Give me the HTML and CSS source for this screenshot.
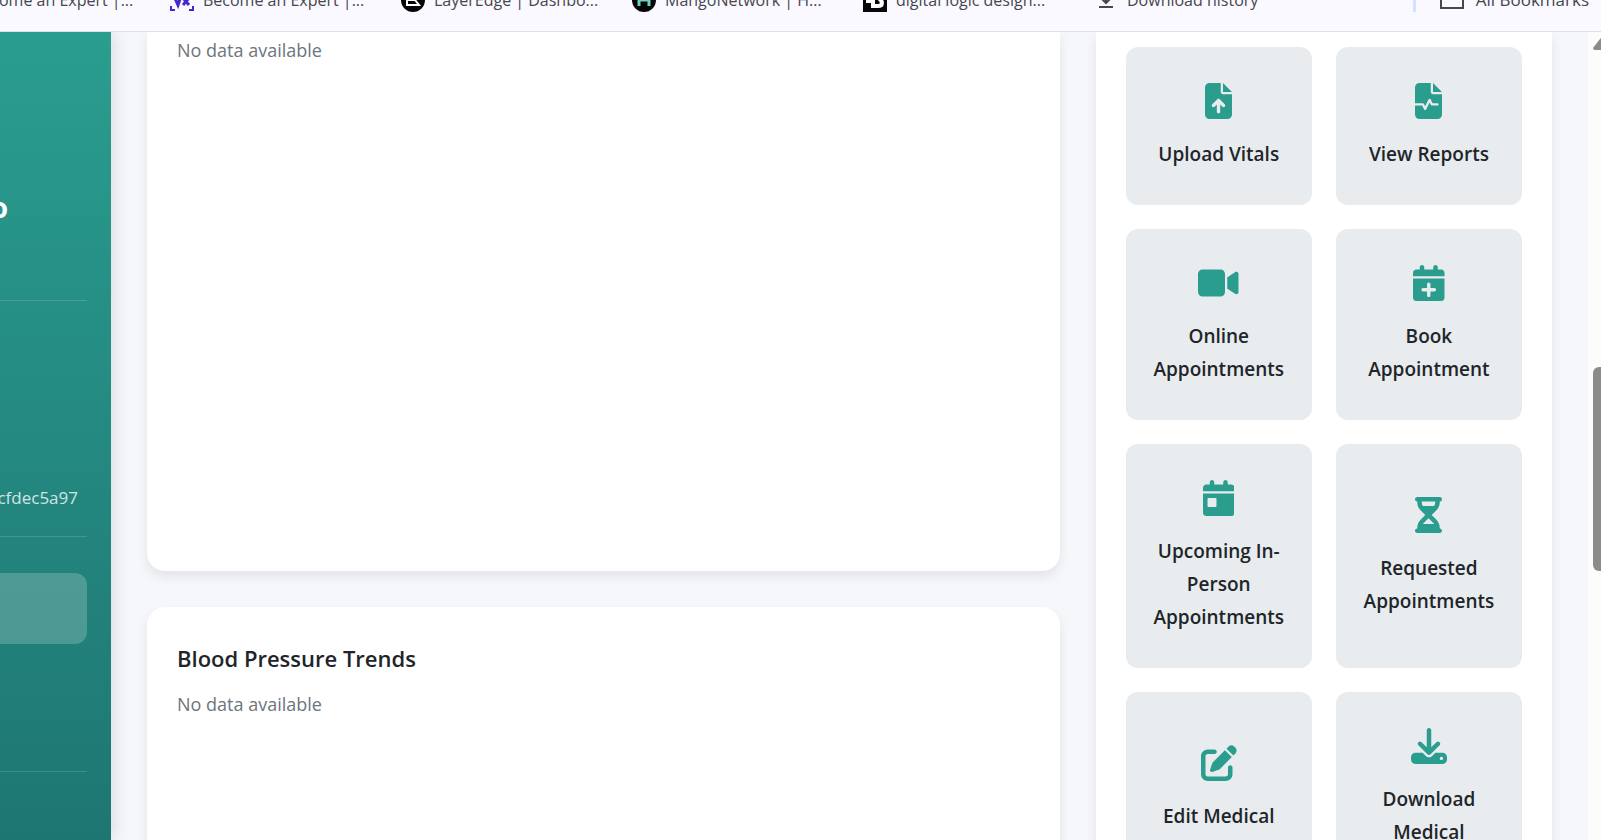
FILE: index.html
```html
<!DOCTYPE html>
<html lang="en">
<head>
<meta charset="utf-8">
<meta name="viewport" content="width=device-width, initial-scale=1">
<title>Patient Dashboard</title>
<link rel="stylesheet" href="styles.css">
</head>
<body>
<nav class="bookmarks" aria-label="Bookmarks">
  <a class="bookmark bookmark--first" href="#"><span class="favicon"></span><span class="bookmark-label">Become an Expert |...</span></a>
  <a class="bookmark" href="#">
    <svg class="favicon" viewBox="0 0 24 24" fill="none" stroke="#4527cf"><path stroke-width="2" d="M1 18v4h4M23 18v4h-4"/><path stroke-width="3" d="M4 8l4 9 3-9M13 10l6 7M19 10l-6 7"/></svg>
    <span class="bookmark-label">Become an Expert |...</span></a>
  <a class="bookmark" href="#">
    <svg class="favicon" viewBox="0 0 24 24"><circle cx="12" cy="12" r="12" fill="#050505"/><path d="M6 6h9M6 12h8l4 5H6z" fill="none" stroke="#fff" stroke-width="2"/></svg>
    <span class="bookmark-label">LayerEdge | Dashbo...</span></a>
  <a class="bookmark" href="#">
    <svg class="favicon" viewBox="0 0 24 24"><circle cx="12" cy="12" r="12" fill="#050505"/><path d="M7 5v13M17 5v13M7 12h10" fill="none" stroke="#6fcfc4" stroke-width="3"/></svg>
    <span class="bookmark-label">MangoNetwork | H...</span></a>
  <a class="bookmark" href="#">
    <svg class="favicon" viewBox="0 0 24 24"><path d="M0 0h24v24H0z" fill="#080808"/><path d="M3 13h7v5h5c5 0 5-5 1-7" fill="none" stroke="#fff" stroke-width="4"/></svg>
    <span class="bookmark-label">digital logic design...</span></a>
  <a class="bookmark" href="#">
    <svg class="favicon" viewBox="0 0 24 24" fill="none" stroke="#47464d" stroke-width="2"><path d="M12 2v12M6 9l6 6 6-6M5 19h14"/></svg>
    <span class="bookmark-label">Download history</span></a>
  <a class="all-bookmarks" href="#">
    <svg class="favicon" viewBox="0 0 24 24" fill="none" stroke="#47464d" stroke-width="2"><path d="M1 3h9l2 3h11v14H1z"/></svg>
    All Bookmarks</a>
</nav>
<div class="page">
  <aside class="sidebar">
    <div class="profile-name">o</div>
    <div class="profile-id">cfdec5a97</div>
    <a class="nav-active" href="#" aria-label="Dashboard"></a>
  </aside>
  <main class="content">
    <div class="trends">
      <section class="card card--scrolled"><p class="empty">No data available</p></section>
      <section class="card"><h2 class="card-title">Blood Pressure Trends</h2><p class="empty">No data available</p></section>
    </div>
    <section class="actions" aria-label="Quick actions">
      <a class="tile" href="#"><svg class="icon" viewBox="0 0 384 512"><path d="M64 0C28.7 0 0 28.7 0 64V448c0 35.3 28.7 64 64 64H320c35.3 0 64-28.7 64-64V160H256c-17.7 0-32-14.3-32-32V0H64zM256 0V128H384L256 0zM216 408c0 13.3-10.7 24-24 24s-24-10.7-24-24V305.9l-31 31c-9.4 9.4-24.6 9.4-33.9 0s-9.4-24.6 0-33.9l72-72c9.4-9.4 24.6-9.4 33.9 0l72 72c9.4 9.4 9.4 24.6 0 33.9s-24.6 9.4-33.9 0l-31-31V408z"/></svg>Upload Vitals</a>
      <a class="tile" href="#"><svg class="icon" viewBox="32 0 384 512"><path d="M96 0C60.7 0 32 28.7 32 64V288H144c6.1 0 11.6 3.4 14.3 8.8L176 332.2l49.7-99.4c2.7-5.4 8.3-8.8 14.3-8.8s11.6 3.4 14.3 8.8L281.9 288H352c8.8 0 16 7.2 16 16s-7.2 16-16 16H272c-6.1 0-11.6-3.4-14.3-8.8L240 275.8l-49.7 99.4c-2.7 5.4-8.3 8.8-14.3 8.8s-11.6-3.4-14.3-8.8L134.1 320H32V448c0 35.3 28.7 64 64 64H352c35.3 0 64-28.7 64-64V160H288c-17.7 0-32-14.3-32-32V0H96zM288 0V128H416L288 0z"/></svg>View Reports</a>
      <a class="tile" href="#"><svg class="icon" viewBox="0 0 576 512"><path d="M0 128C0 92.7 28.7 64 64 64H320c35.3 0 64 28.7 64 64V384c0 35.3-28.7 64-64 64H64c-35.3 0-64-28.7-64-64V128zM559.1 99.8c10.4 5.6 16.9 16.4 16.9 28.2V384c0 11.8-6.5 22.6-16.9 28.2s-23 5-32.9-1.6l-96-64L416 337.1V320 192 174.9l14.2-9.5 96-64c9.8-6.5 22.4-7.2 32.9-1.6z"/></svg>Online Appointments</a>
      <a class="tile" href="#"><svg class="icon" viewBox="0 0 448 512"><path d="M96 32V64H48C21.5 64 0 85.5 0 112v48H448V112c0-26.5-21.5-48-48-48H352V32c0-17.7-14.3-32-32-32s-32 14.3-32 32V64H160V32c0-17.7-14.3-32-32-32S96 14.3 96 32zM448 192H0V464c0 26.5 21.5 48 48 48H400c26.5 0 48-21.5 48-48V192zM224 248c13.3 0 24 10.7 24 24v56h56c13.3 0 24 10.7 24 24s-10.7 24-24 24H248v56c0 13.3-10.7 24-24 24s-24-10.7-24-24V376H144c-13.3 0-24-10.7-24-24s10.7-24 24-24h56V272c0-13.3 10.7-24 24-24z"/></svg>Book Appointment</a>
      <a class="tile" href="#"><svg class="icon" viewBox="0 0 448 512"><path d="M96 32V64H48C21.5 64 0 85.5 0 112v48H448V112c0-26.5-21.5-48-48-48H352V32c0-17.7-14.3-32-32-32s-32 14.3-32 32V64H160V32c0-17.7-14.3-32-32-32S96 14.3 96 32zM448 192H0V464c0 26.5 21.5 48 48 48H400c26.5 0 48-21.5 48-48V192zM80 256h96c8.8 0 16 7.2 16 16v96c0 8.8-7.2 16-16 16H80c-8.8 0-16-7.2-16-16V272c0-8.8 7.2-16 16-16z"/></svg>Upcoming In-Person Appointments</a>
      <a class="tile" href="#"><svg class="icon" viewBox="0 0 384 512"><path d="M32 0C14.3 0 0 14.3 0 32S14.3 64 32 64V75c0 42.4 16.9 83.1 46.9 113.1L146.7 256 78.9 323.9C48.9 353.9 32 394.6 32 437v11c-17.7 0-32 14.3-32 32s14.3 32 32 32H352c17.7 0 32-14.3 32-32s-14.3-32-32-32V437c0-42.4-16.9-83.1-46.9-113.1L237.3 256l67.9-67.9c30-30 46.9-70.7 46.9-113.1V64c17.7 0 32-14.3 32-32s-14.3-32-32-32H32zM96 75V64H288V75c0 19-5.6 37.4-16 53H112c-10.3-15.6-16-34-16-53zm16 309c3.5-5.3 7.6-10.3 12.1-14.9L192 301.3l67.9 67.9c4.6 4.6 8.6 9.6 12.1 14.9H112z"/></svg>Requested Appointments</a>
      <a class="tile" href="#"><svg class="icon" viewBox="0 0 512 512"><path d="M471.6 21.7c-21.9-21.9-57.3-21.9-79.2 0L362.3 51.7l97.9 97.9 30.1-30.1c21.9-21.9 21.9-57.3 0-79.2L471.6 21.7zm-299.2 220c-6.1 6.1-10.8 13.6-13.5 21.9l-29.6 88.8c-2.9 8.6-.6 18.1 5.8 24.6s15.9 8.7 24.6 5.8l88.8-29.6c8.2-2.7 15.7-7.4 21.9-13.5L437.7 172.3 339.7 74.3 172.4 241.7zM96 64C43 64 0 107 0 160V416c0 53 43 96 96 96H352c53 0 96-43 96-96V320c0-17.7-14.3-32-32-32s-32 14.3-32 32v96c0 17.7-14.3 32-32 32H96c-17.7 0-32-14.3-32-32V160c0-17.7 14.3-32 32-32h96c17.7 0 32-14.3 32-32s-14.3-32-32-32H96z"/></svg>Edit Medical Records</a>
      <a class="tile" href="#"><svg class="icon" viewBox="0 0 512 512"><path d="M288 32c0-17.7-14.3-32-32-32s-32 14.3-32 32V274.7l-73.4-73.4c-12.5-12.5-32.8-12.5-45.3 0s-12.5 32.8 0 45.3l128 128c12.5 12.5 32.8 12.5 45.3 0l128-128c12.5-12.5 12.5-32.8 0-45.3s-32.8-12.5-45.3 0L288 274.7V32zM64 352c-35.3 0-64 28.7-64 64v32c0 35.3 28.7 64 64 64H448c35.3 0 64-28.7 64-64V416c0-35.3-28.7-64-64-64H346.5l-45.3 45.3c-25 25-65.5 25-90.5 0L165.5 352H64zm368 56a24 24 0 1 1 0 48 24 24 0 1 1 0-48z"/></svg>Download Medical Records</a>
    </section>
  </main>
  <div class="scrollbar" aria-hidden="true">
    <svg class="scroll-arrow" viewBox="0 0 18 12"><path d="M7 1q2-2 4 0l7 9q0 2-2 2H2q-2 0-2-2z"/></svg>
    <div class="scroll-thumb"></div>
  </div>
</div>
</body>
</html>
```
FILE: styles.css
```css
* {
  box-sizing: border-box;
}

body {
  margin: 0;
  height: 100vh;
  overflow: hidden;
  display: flex;
  flex-direction: column;
  background: #f5f7fb;
  color: #212529;
  font-family: "Open Sans", "Noto Sans", sans-serif;
  font-size: 18px;
}

a {
  color: inherit;
  text-decoration: none;
}

/* Bookmarks bar */
.bookmarks {
  flex: none;
  display: flex;
  align-items: flex-end;
  gap: 33px;
  height: 32px;
  padding: 0 12px 19px 0;
  overflow: hidden;
  background: #faf9ff;
  border-bottom: 1px solid #dfdfe9;
  color: #47464d;
  font-size: 16px;
  line-height: 24px;
  white-space: nowrap;
}

.bookmark {
  flex: none;
  display: flex;
  align-items: center;
  gap: 9px;
}

.bookmark--first {
  margin-left: -61px;
}

.bookmark-label {
  min-width: 165px;
}

.favicon {
  flex: none;
  width: 24px;
  height: 24px;
}

.all-bookmarks {
  display: flex;
  align-items: center;
  gap: 12px;
  margin-left: auto;
  padding-left: 24px;
  border-left: 3px solid #d3e3fd;
  font-size: 17px;
}

/* Page */
.page {
  flex: 1;
  min-height: 0;
  display: flex;
  overflow: hidden;
}

.sidebar {
  flex: none;
  width: 111px;
  padding-right: 24px;
  display: flex;
  flex-direction: column;
  background: linear-gradient(#2a9d8f, #1e7672);
  box-shadow: 4px 0 15px rgba(0, 0, 0, 0.1);
  color: #fff;
}

.profile-name,
.profile-id {
  display: flex;
  align-items: flex-end;
  justify-content: flex-end;
  border-bottom: 1px solid rgba(255, 255, 255, 0.15);
}

.profile-name {
  height: 269px;
  padding: 0 79px 73px 0;
  font-size: 28px;
  font-weight: 700;
  line-height: 40px;
}

.profile-id {
  height: 236px;
  padding: 0 9px 24px 0;
  color: rgba(255, 255, 255, 0.8);
  font-size: 17px;
  line-height: 28px;
}

.nav-active {
  height: 71px;
  margin-top: 36px;
  border-radius: 0 12px 12px 0;
  background: rgba(255, 255, 255, 0.2);
}

.sidebar::after {
  content: "";
  margin-top: 127px;
  border-top: 1px solid rgba(255, 255, 255, 0.15);
}

.content {
  flex: 1;
  min-width: 0;
  display: grid;
  grid-template-columns: 2fr 1fr;
  gap: 36px;
  padding: 0 36px;
}

.trends {
  display: flex;
  flex-direction: column;
  gap: 36px;
}

.card,
.actions {
  background: #fff;
  box-shadow: 0 6px 12px rgba(0, 0, 0, 0.08);
}

.card {
  flex: none;
  min-height: 620px;
  padding: 36px 30px;
  border-radius: 18px;
}

.card--scrolled {
  min-height: 539px;
  padding-top: 3px;
  border-radius: 0 0 18px 18px;
}

.card-title {
  margin: 0 0 16px;
  font-size: 22px;
  font-weight: 600;
  line-height: 30px;
}

.empty {
  margin: 0;
  color: #6c757d;
  line-height: 30px;
}

.actions {
  display: grid;
  grid-template-columns: 1fr 1fr;
  grid-auto-rows: max-content;
  gap: 24px;
  padding: 15px 30px;
}

.tile {
  display: flex;
  flex-direction: column;
  align-items: center;
  justify-content: center;
  padding: 36px 24px 34px;
  border-radius: 12px;
  background: #e8ecef;
  font-size: 19px;
  font-weight: 600;
  line-height: 33px;
  text-align: center;
}

.icon {
  flex: none;
  height: 36px;
  margin-bottom: 19px;
  fill: #2a9d8f;
  fill-rule: evenodd;
}

/* Scrollbar */
.scrollbar {
  flex: none;
  width: 13px;
  padding: 6px 0 0 5px;
  display: flex;
  flex-direction: column;
  overflow: hidden;
  background: #fcfcfc;
}

.scroll-arrow {
  flex: none;
  width: 18px;
  height: 12px;
  fill: #8b8b8b;
}

.scroll-thumb {
  flex: none;
  width: 12px;
  height: 204px;
  margin-top: 317px;
  border-radius: 6px 0 0 6px;
  background: #8b8b8b;
}
```
